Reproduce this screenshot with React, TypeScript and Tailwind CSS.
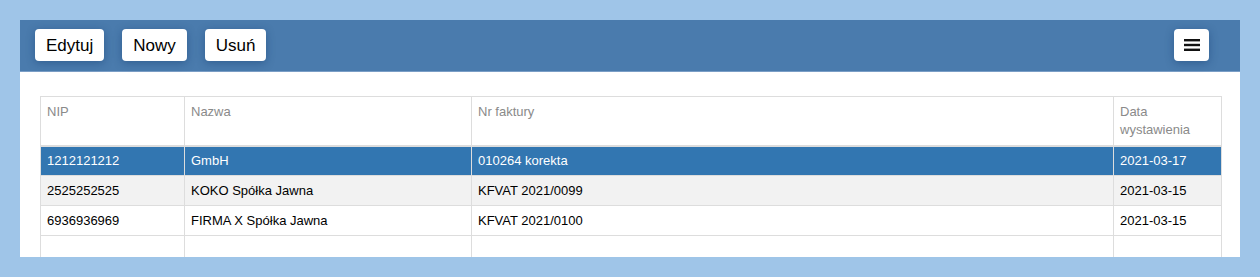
const rows = [
  { nip: "1212121212", name: "GmbH", nr: "010264 korekta", date: "2021-03-17" },
  { nip: "2525252525", name: "KOKO Spółka Jawna", nr: "KFVAT 2021/0099", date: "2021-03-15" },
  { nip: "6936936969", name: "FIRMA X Spółka Jawna", nr: "KFVAT 2021/0100", date: "2021-03-15" },
];

function ToolButton({ label }: { label: string }) {
  return (
    <button className="h-[32px] rounded-[4px] bg-white px-[11px] text-[17px] leading-none text-black shadow-[0_2px_8px_rgba(20,60,110,0.45)]">
      {label}
    </button>
  );
}

export default function App() {
  return (
    <div className="h-[277px] w-[1260px] bg-[#9fc5e8] p-5 font-['Liberation_Sans',Arial,sans-serif]">
      <div className="flex h-[237px] flex-col overflow-hidden bg-white">
        <div className="flex h-[52px] shrink-0 items-start justify-between border-b border-[#7a9ec6] bg-[#4a7bad] pl-[15px] pr-[31px] pt-[9px]">
          <div className="flex gap-[18px]">
            <ToolButton label="Edytuj" />
            <ToolButton label="Nowy" />
            <ToolButton label="Usuń" />
          </div>
          <button className="flex h-[32px] w-[35px] items-center justify-center rounded-[4px] bg-white shadow-[0_2px_8px_rgba(20,60,110,0.45)]">
            <svg width="16" height="14" viewBox="0 0 16 14">
              <rect x="0" y="1" width="16" height="2.4" fill="#111" />
              <rect x="0" y="5.8" width="16" height="2.4" fill="#111" />
              <rect x="0" y="10.6" width="16" height="2.4" fill="#111" />
            </svg>
          </button>
        </div>
        <div className="pl-5 pr-[18px] pt-[24px]">
          <table className="w-full border-collapse text-[13px] leading-[18px]">
            <thead>
              <tr className="text-left text-[#8a8a8a]">
                <th className="h-[49px] w-[144px] border border-b-2 border-[#dddddd] px-[6px] pb-[5px] pt-[6px] align-top font-normal">NIP</th>
                <th className="w-[287px] border border-b-2 border-[#dddddd] px-[6px] pb-[5px] pt-[6px] align-top font-normal">Nazwa</th>
                <th className="border border-b-2 border-[#dddddd] px-[6px] pb-[5px] pt-[6px] align-top font-normal">Nr faktury</th>
                <th className="w-[108px] border border-b-2 border-[#dddddd] px-[6px] pb-[5px] pt-[6px] align-top font-normal">
                  Data
                  <br />
                  wystawienia
                </th>
              </tr>
            </thead>
            <tbody>
              {rows.map((r, i) => (
                <tr
                  key={r.nip}
                  className={
                    i === 0
                      ? "bg-[#3276b1] text-white"
                      : i === 1
                        ? "bg-[#f2f2f2] text-black"
                        : "bg-white text-black"
                  }
                >
                  <td className="h-[30px] border border-[#dddddd] px-[6px]">{r.nip}</td>
                  <td className="border border-[#dddddd] px-[6px]">{r.name}</td>
                  <td className="border border-[#dddddd] px-[6px]">{r.nr}</td>
                  <td className="border border-[#dddddd] px-[6px]">{r.date}</td>
                </tr>
              ))}
              <tr>
                <td className="h-[30px] border border-[#dddddd]" />
                <td className="border border-[#dddddd]" />
                <td className="border border-[#dddddd]" />
                <td className="border border-[#dddddd]" />
              </tr>
            </tbody>
          </table>
        </div>
      </div>
    </div>
  );
}
